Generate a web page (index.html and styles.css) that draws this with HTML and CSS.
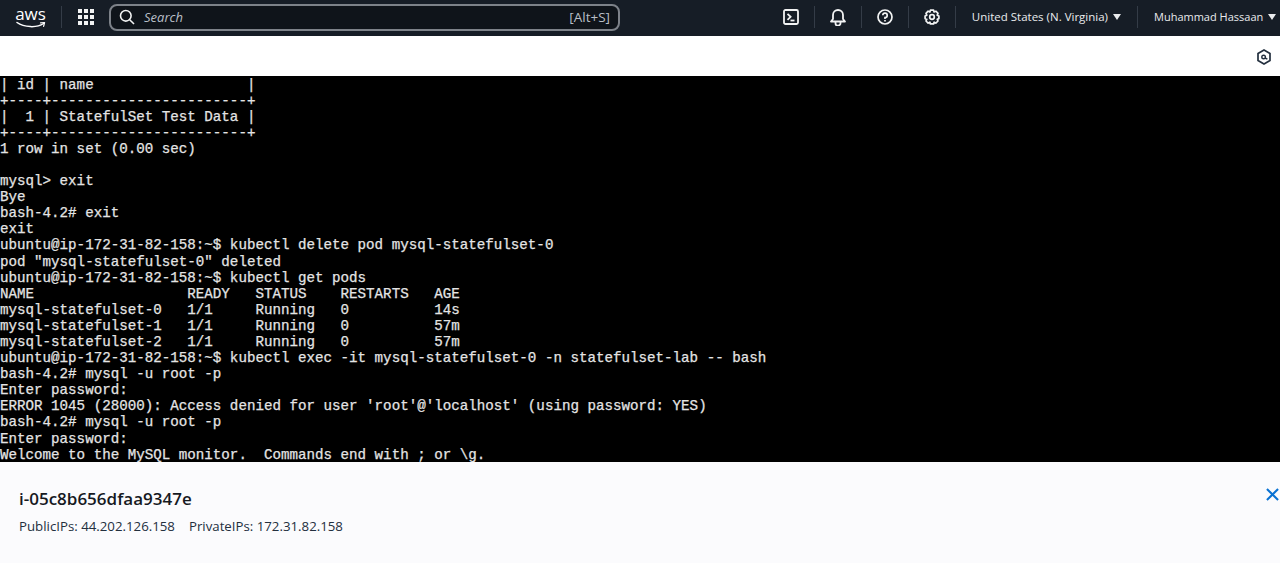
FILE: index.html
```html
<!DOCTYPE html>
<html lang="en">
<head>
<meta charset="utf-8">
<title>EC2 Instance Connect</title>
<link rel="stylesheet" href="styles.css">
</head>
<body>
<div class="page">
<header class="nav">
  <div class="logo">
    <span class="logo-text">aws</span>
    <svg class="smile" width="31" height="8" viewBox="0 0 31 8" fill="none">
      <path d="M2 1.5C9 6.5 22 7.1 28.5 2.5" stroke="#fff" stroke-width="1.5" stroke-linecap="round"/>
      <path d="M25.5 1.8L29.6 1.5L28.6 5.3" stroke="#fff" stroke-width="1.2" stroke-linecap="round" stroke-linejoin="round"/>
    </svg>
  </div>
  <span class="sep sep-logo"></span>
  <svg class="grid-icon" width="16" height="16" viewBox="0 0 16 16" fill="#f2f3f3">
    <rect x="0" y="0" width="4" height="4"/><rect x="6" y="0" width="4" height="4"/><rect x="12" y="0" width="4" height="4"/>
    <rect x="0" y="6" width="4" height="4"/><rect x="6" y="6" width="4" height="4"/><rect x="12" y="6" width="4" height="4"/>
    <rect x="0" y="12" width="4" height="4"/><rect x="6" y="12" width="4" height="4"/><rect x="12" y="12" width="4" height="4"/>
  </svg>
  <div class="search">
    <svg width="16" height="16" viewBox="0 0 16 16" fill="none" stroke="#f2f3f3" stroke-width="1.6"><circle cx="6.8" cy="6.8" r="5.3"/><path d="M10.7 10.7L15 15"/></svg>
    <span class="search-text">Search</span>
    <span class="search-key">[Alt+S]</span>
  </div>
  <div class="nav-right">
    <span class="nav-item">
      <svg width="16" height="16" viewBox="0 0 16 16" fill="none" stroke="#f2f3f3" stroke-width="1.8"><rect x="1" y="1" width="14" height="14" rx="1.5"/><path d="M4.5 4.8L7.6 7.8L4.5 10.8"/><path d="M7.5 11.5H11.5"/></svg>
    </span>
    <span class="sep"></span>
    <span class="nav-item">
      <svg width="16" height="17" viewBox="0 0 16 17" fill="none" stroke="#f2f3f3" stroke-width="1.8" stroke-linejoin="round"><path d="M1 12.5H15L13 10V6A5 5 0 0 0 3 6V10Z"/><path d="M5.5 13V14.2A2.5 2.5 0 0 0 10.5 14.2V13"/></svg>
    </span>
    <span class="sep"></span>
    <span class="nav-item">
      <svg width="16" height="16" viewBox="0 0 16 16" fill="none" stroke="#f2f3f3" stroke-width="1.7"><circle cx="8" cy="8" r="7"/><path d="M5.8 6.3A2.2 2.2 0 1 1 8 8.6V10"/><path d="M8 11V12.6"/></svg>
    </span>
    <span class="sep"></span>
    <span class="nav-item">
      <svg width="16" height="16" viewBox="0 0 16 16" fill="none" stroke="#f2f3f3" stroke-width="1.7" stroke-linejoin="round"><path d="M6.4 1.2H9.6L10.1 3L12 2.2L14 4.4L13.2 6.2L14.9 7V9.6L13.2 10.2L14 12L11.8 14.1L10.1 13.2L9.6 14.9H6.4L5.9 13.2L4.1 14.1L2 12L2.8 10.2L1.1 9.6V7L2.8 6.2L2 4.4L4.1 2.2L5.9 3Z"/><circle cx="8" cy="8" r="2.3"/></svg>
    </span>
    <span class="sep"></span>
    <span class="nav-label nav-region">United States (N. Virginia) <i class="caret"></i></span>
    <span class="sep"></span>
    <span class="nav-label nav-user">Muhammad Hassaan <i class="caret"></i></span>
  </div>
</header>
<div class="toolbar">
  <svg width="14" height="16" viewBox="0 0 14 16" fill="none" stroke="#232f3e" stroke-width="1.7"><path d="M7 1L13 4.4V11.6L7 15L1 11.6V4.4Z"/><circle cx="6.6" cy="8" r="1.8" stroke-width="1.4"/><path d="M8 9L10.4 10.2" stroke-width="1.4"/></svg>
</div>
<pre class="terminal">| id | name                  |
+----+-----------------------+
|  1 | StatefulSet Test Data |
+----+-----------------------+
1 row in set (0.00 sec)

mysql&gt; exit
Bye
bash-4.2# exit
exit
ubuntu@ip-172-31-82-158:~$ kubectl delete pod mysql-statefulset-0
pod "mysql-statefulset-0" deleted
ubuntu@ip-172-31-82-158:~$ kubectl get pods
NAME                  READY   STATUS    RESTARTS   AGE
mysql-statefulset-0   1/1     Running   0          14s
mysql-statefulset-1   1/1     Running   0          57m
mysql-statefulset-2   1/1     Running   0          57m
ubuntu@ip-172-31-82-158:~$ kubectl exec -it mysql-statefulset-0 -n statefulset-lab -- bash
bash-4.2# mysql -u root -p
Enter password:
ERROR 1045 (28000): Access denied for user 'root'@'localhost' (using password: YES)
bash-4.2# mysql -u root -p
Enter password:
Welcome to the MySQL monitor.  Commands end with ; or \g.</pre>
<footer class="details">
  <div>
    <h1 class="instance">i-05c8b656dfaa9347e</h1>
    <p class="ips"><span class="ip">PublicIPs: 44.202.126.158</span><span>PrivateIPs: 172.31.82.158</span></p>
  </div>
  <svg class="close" width="13" height="13" viewBox="0 0 14 14" fill="none" stroke="#0972d3" stroke-width="2.2"><path d="M1 1L13 13M13 1L1 13"/></svg>
</footer>
</div>
</body>
</html>
```
FILE: styles.css
```css
* { box-sizing: border-box; }
html, body { margin: 0; padding: 0; }
body { font-family: "Open Sans", "Noto Sans", sans-serif; background: #fff; overflow: hidden; }
.page { width: 1280px; height: 563px; display: flex; flex-direction: column; overflow: hidden; }
.nav { height: 36px; flex: none; display: flex; align-items: center; background: #161d26; color: #f2f3f3; padding-left: 15px; padding-bottom: 2px; }
.logo { flex: none; width: 31px; display: flex; flex-direction: column; align-items: center; margin-top: 1px; }
.logo-text { font-size: 17px; line-height: 14px; height: 14px; color: #fff; }
.smile { display: block; }
.sep { width: 1px; height: 22px; background: #343c47; flex: none; }
.sep-logo { margin-left: 15px; }
.grid-icon { margin-left: 16px; flex: none; }
.search { margin-left: 15px; width: 511px; height: 27px; flex: none; border: 2px solid #7d8289; border-radius: 8px; background: #0f141a; display: flex; align-items: center; padding: 0 8px; color: #b9bfc7; }
.search-text { margin-left: 9px; font-style: italic; font-size: 13px; }
.search-key { margin-left: auto; font-size: 13.5px; }
.nav-right { margin-left: auto; display: flex; align-items: center; }
.nav-item { width: 46px; display: flex; justify-content: center; align-items: center; }
.nav-label { font-size: 11.5px; color: #e9ebed; white-space: nowrap; display: flex; align-items: center; gap: 5px; padding-bottom: 1px; }
.nav-region { padding-left: 16px; padding-right: 16px; }
.nav-user { padding-left: 16px; width: 142px; font-size: 11px; }
.caret { display: inline-block; width: 0; height: 0; border-left: 4.5px solid transparent; border-right: 4.5px solid transparent; border-top: 6px solid #e9ebed; }
.toolbar { height: 40px; flex: none; background: #fff; display: flex; justify-content: flex-end; align-items: center; padding-right: 9px; padding-top: 2px; }
.terminal { margin: 0; padding-top: 0.5px; height: 386px; flex: none; overflow: hidden; background: #000; color: #e4e4e4; font-family: "Liberation Mono", monospace; font-size: 14.2px; line-height: 16.1px; -webkit-text-stroke: 0.25px #e4e4e4; }
.details { flex: 1; background: #fbfbfd; display: flex; justify-content: space-between; padding: 26px 1px 0 19px; }
.instance { margin: 0; font-size: 17px; line-height: 22px; font-weight: 600; color: #16191f; }
.ips { margin: 7px 0 0; font-size: 13.25px; line-height: 18px; color: #232f3e; }
.ip { margin-right: 14px; }
```
